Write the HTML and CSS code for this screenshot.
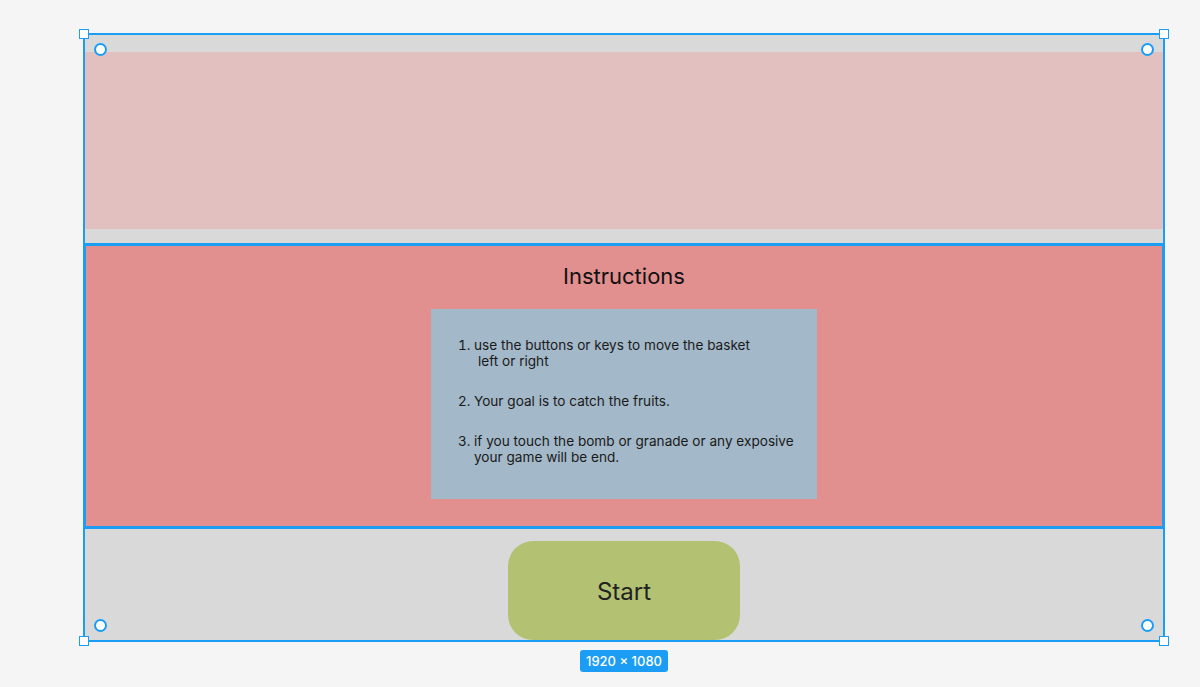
FILE: index.html
```html
<!DOCTYPE html>
<html>
<head>
<meta charset="utf-8">
<link rel="stylesheet" href="styles.css">
</head>
<body>
<div class="canvas">
  <div class="frame">
    <div class="banner"></div>
    <section class="instructions">
      <h1 class="title">Instructions</h1>
      <div class="card">
        <ol class="steps">
          <li>use the buttons or keys to move the basket<br><span class="indent">left or right</span></li>
          <li>Your goal is to catch the fruits.</li>
          <li>if you touch the bomb or granade or any exposive<br>your game will be end.</li>
        </ol>
      </div>
    </section>
    <div class="footer">
      <button class="start">Start</button>
    </div>
    <span class="handle sq tl"></span>
    <span class="handle sq tr"></span>
    <span class="handle sq bl"></span>
    <span class="handle sq br"></span>
    <span class="handle dot tl"></span>
    <span class="handle dot tr"></span>
    <span class="handle dot bl"></span>
    <span class="handle dot br"></span>
  </div>
  <div class="size-row"><span class="size">1920 × 1080</span></div>
</div>
</body>
</html>
```
FILE: styles.css
```css
html, body {
  margin: 0;
  padding: 0;
  background: #f5f5f5;
  font-family: Inter, "Noto Sans", sans-serif;
  height: 100%;
}
.canvas {
  padding-top: 33px;
  padding-left: 83px;
  width: 1083px;
}
.frame {
  position: relative;
  box-sizing: border-box;
  width: 1082px;
  height: 609px;
  border: 2px solid #1b9df5;
  background: #d9d9d9;
  padding-top: 17px;
  display: flex;
  flex-direction: column;
}
.banner {
  height: 177px;
  background: #e3c0c0;
}
.instructions {
  margin: 14px -2px 0;
  height: 286px;
  box-sizing: border-box;
  border: 3px solid #1b9df5;
  background: #e28f8f;
  display: flex;
  flex-direction: column;
  align-items: center;
}
.title {
  margin: 15px 0 0;
  font-size: 22px;
  font-weight: 400;
  line-height: 30px;
  color: #111;
}
.card {
  margin-top: 18px;
  width: 386px;
  height: 190px;
  background: #a3b8c8;
  box-sizing: border-box;
  padding-top: 28px;
}
.steps {
  margin: 0;
  padding-left: 43px;
  font-size: 13.6px;
  line-height: 16px;
  color: #1a1a1a;
}
.steps li {
  margin-bottom: 24px;
}
.indent {
  padding-left: 4px;
}
.footer {
  flex: 1;
  display: flex;
  justify-content: center;
  padding-top: 12px;
}
.start {
  width: 232px;
  height: 99px;
  border: none;
  border-radius: 25px;
  background: #b3c272;
  font-family: Inter, "Noto Sans", sans-serif;
  font-size: 24px;
  color: #222;
  padding: 2px 0 0;
}
.handle {
  position: absolute;
  box-sizing: border-box;
  background: #fff;
  border: 1.5px solid #1b9df5;
}
.sq {
  width: 10px;
  height: 10px;
}
.sq.tl { left: -6px; top: -6px; }
.sq.tr { right: -6px; top: -6px; }
.sq.bl { left: -6px; bottom: -6px; }
.sq.br { right: -6px; bottom: -6px; }
.dot {
  width: 13px;
  height: 13px;
  border-radius: 50%;
  border-width: 2px;
}
.dot.tl { left: 9px; top: 8px; }
.dot.tr { right: 9px; top: 8px; }
.dot.bl { left: 9px; bottom: 8px; }
.dot.br { right: 9px; bottom: 8px; }
.size-row {
  display: flex;
  justify-content: center;
  padding-top: 8px;
  width: 1082px;
}
.size {
  background: #1b9df5;
  color: #fff;
  font-size: 13px;
  font-weight: 500;
  line-height: 22px;
  height: 22px;
  padding: 0 6px;
  border-radius: 3px;
}
```
